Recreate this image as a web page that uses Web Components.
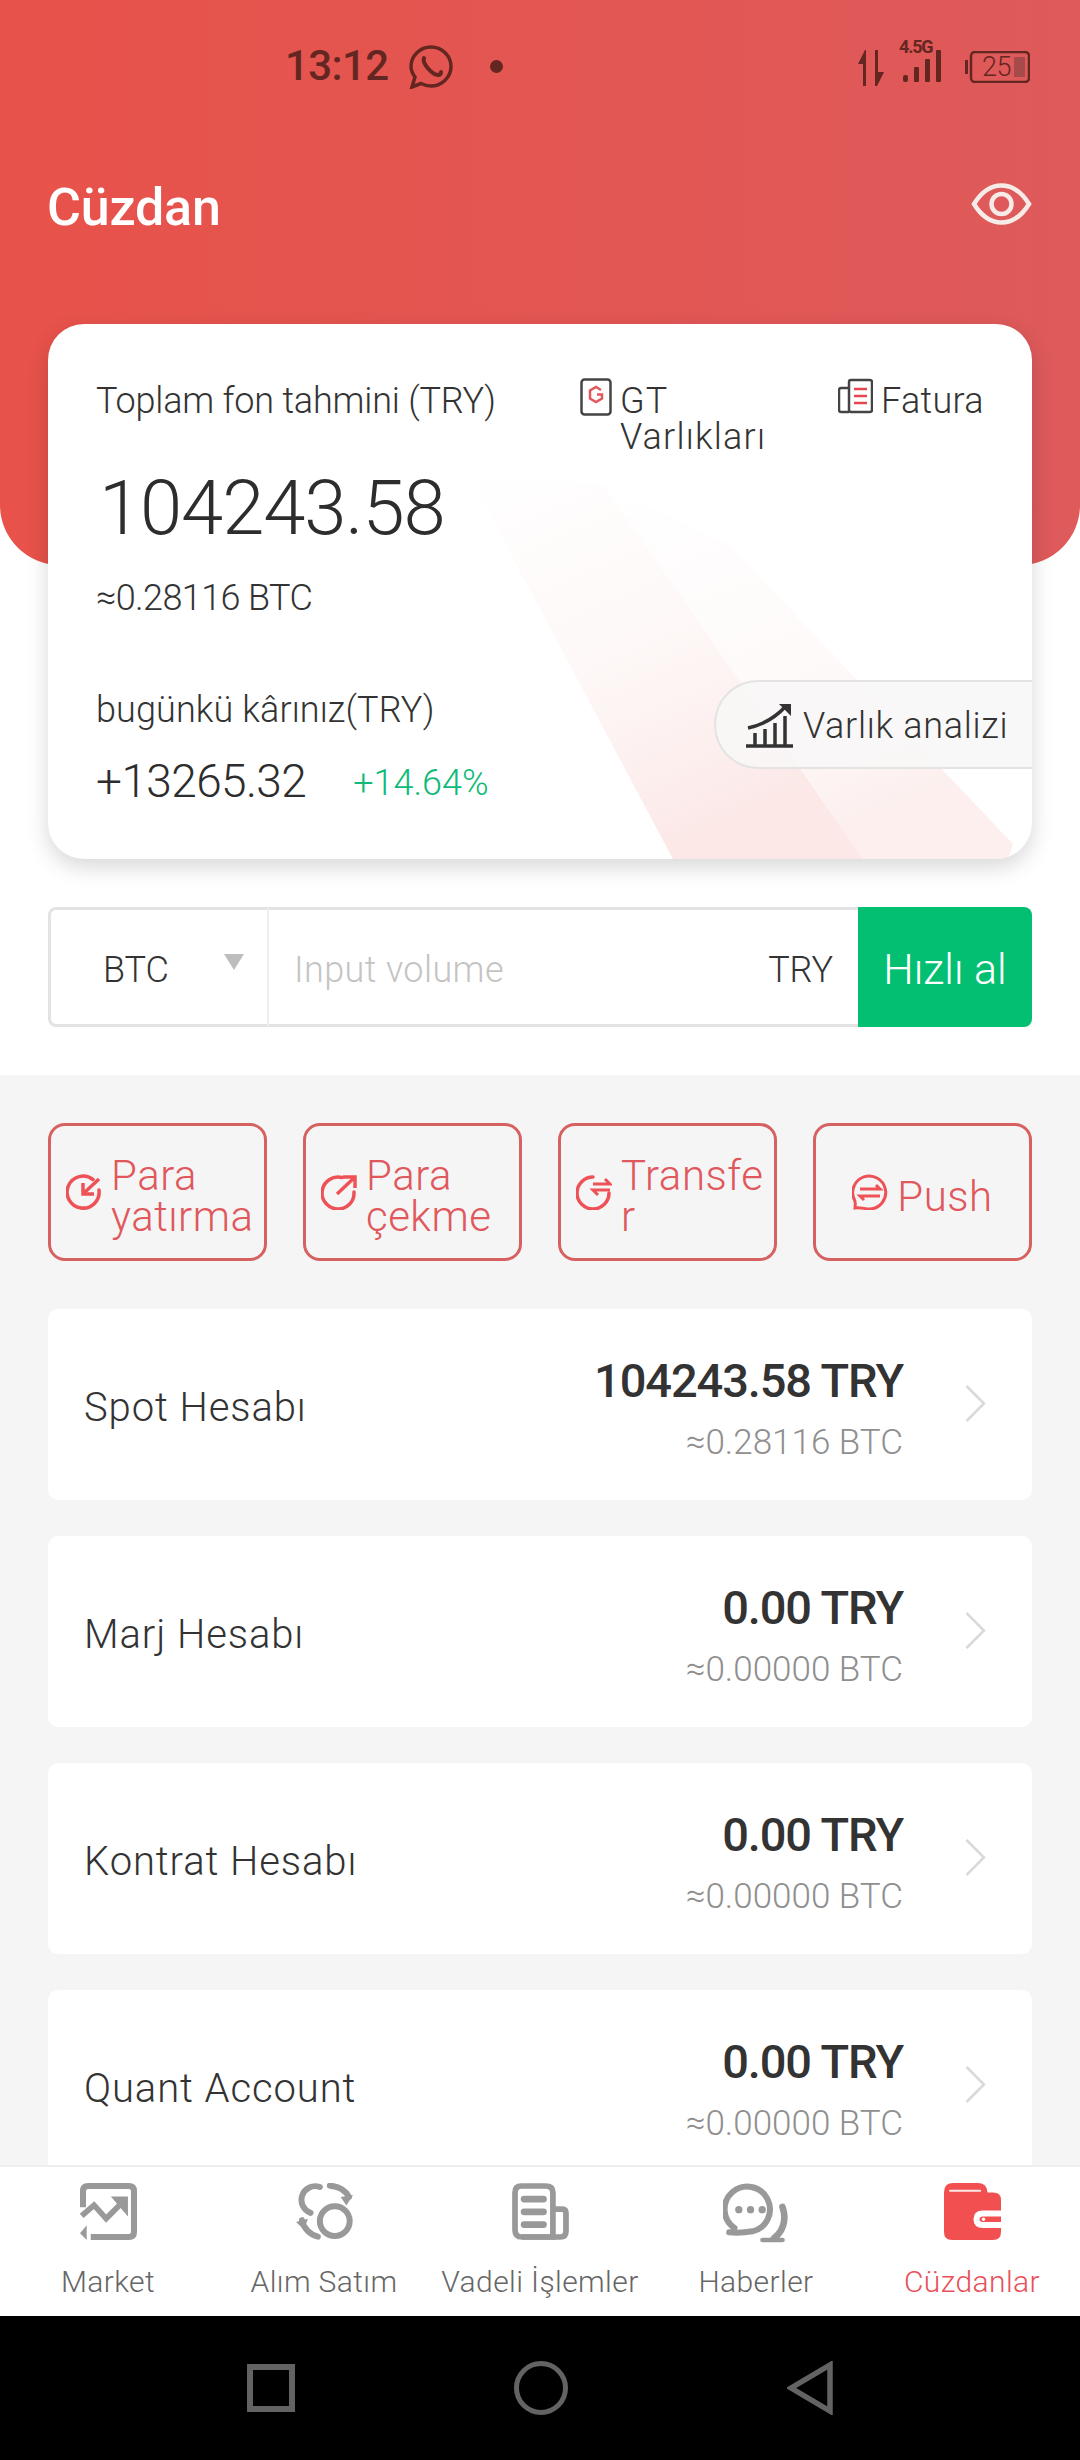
<!DOCTYPE html>
<html lang="tr">
<head>
<meta charset="utf-8">
<title>Cüzdan</title>
<style>
html,body{margin:0;padding:0;background:#000}
body{width:1080px;height:2460px;overflow:hidden;font-family:Roboto,"Noto Sans",sans-serif;font-weight:300;color:#333}
</style>
</head>
<body>
<wallet-app>
  <wallet-header>
    <status-bar></status-bar>
  </wallet-header>
  <asset-card></asset-card>
  <quick-buy></quick-buy>
  <wallet-body>
    <action-row>
      <action-button icon="in">Para yatırma</action-button>
      <action-button icon="out">Para çekme</action-button>
      <action-button icon="swap" class="brk">Transfer</action-button>
      <action-button icon="push">Push</action-button>
    </action-row>
    <account-row>
      <span slot="name">Spot Hesabı</span>
      <span slot="value">104243.58 TRY</span>
      <span slot="sub">≈0.28116 BTC</span>
    </account-row>
    <account-row>
      <span slot="name">Marj Hesabı</span>
      <span slot="value">0.00 TRY</span>
      <span slot="sub">≈0.00000 BTC</span>
    </account-row>
    <account-row>
      <span slot="name">Kontrat Hesabı</span>
      <span slot="value">0.00 TRY</span>
      <span slot="sub">≈0.00000 BTC</span>
    </account-row>
    <account-row>
      <span slot="name">Quant Account</span>
      <span slot="value">0.00 TRY</span>
      <span slot="sub">≈0.00000 BTC</span>
    </account-row>
  </wallet-body>
  <bottom-nav slot="nav">
    <nav-item icon="market">Market</nav-item>
    <nav-item icon="trade">Alım Satım</nav-item>
    <nav-item icon="futures">Vadeli İşlemler</nav-item>
    <nav-item icon="news">Haberler</nav-item>
    <nav-item icon="wallet" active>Cüzdanlar</nav-item>
  </bottom-nav>
  <system-nav slot="nav"></system-nav>
</wallet-app>
<script>
function def(name, html, setup){
  customElements.define(name, class extends HTMLElement{
    constructor(){
      super();
      this.attachShadow({mode:'open'}).innerHTML = html;
    }
    connectedCallback(){ if(setup) setup(this); }
  });
}

def('wallet-app', `<style>
:host{display:flex;flex-direction:column;width:1080px;height:2460px}
main{flex:1;min-height:0;overflow:hidden;background:#fff}
</style><main><slot></slot></main><slot name="nav"></slot>`);

def('wallet-header', `<style>
:host{display:block;height:565px;box-sizing:border-box;background:linear-gradient(90deg,#e8524a,#de5a5b);border-radius:0 0 60px 60px}
.t{display:flex;justify-content:space-between;align-items:flex-start;padding:84px 48px 0 47px;color:#fff}
h1{margin:0;font:500 52px/62px Roboto,sans-serif;letter-spacing:-.2px}
svg{display:block;margin-top:6px}
</style><slot></slot><div class="t"><h1>Cüzdan</h1>
<svg width="61" height="42" viewBox="0 0 61 42" fill="none" stroke="#f7ebe8" stroke-width="4.500"><path d="M3 21C11 8 20 2.500 30.500 2.500S50 8 58 21C50 34 41 39.500 30.500 39.500S11 34 3 21Z"/><circle cx="30.500" cy="21" r="10"/></svg></div>`);

def('status-bar', `<style>
:host{display:flex;align-items:flex-start;height:93px;box-sizing:border-box;padding:40px 50px 0 285px;color:#642620}
.time{font:500 42px/52px Roboto,sans-serif;letter-spacing:-.6px;width:124px;margin-top:0}
.dot{width:13px;height:13px;border-radius:50%;background:#642620;margin:20px 0 0 37px}
.right{margin-left:auto;display:flex;align-items:flex-start}
.net{position:relative;width:46px;height:40px;margin:6px 20px 0 14px}
.net b{position:absolute;left:0;top:-8px;font:700 18px/18px Roboto,sans-serif;letter-spacing:-1.200px}
.bat{position:relative;width:65px;height:32px;margin-top:11px}
.bat span{position:absolute;left:17px;top:3px;font:300 27px/27px Roboto,sans-serif;letter-spacing:-.5px}
</style>
<span class="time">13:12</span>
<svg width="44" height="44" viewBox="0 0 44 44" style="margin-top:5px" fill="none" stroke="#642620"><path stroke-width="3.500" d="M3 42l3-10C3 28 2 25 2 21.500 2 11 11 2 22 2s20 9 20 19.500S33 41 22 41c-4 0-7-1-10-2.500Z"/><path stroke-width="4" stroke-linecap="round" d="M15 13c-2 5 7 16 14 17 2 0 3-1 3-3"/></svg>
<i class="dot"></i>
<div class="right">
<svg width="28" height="36" viewBox="0 0 28 36" style="margin-top:10px" fill="#642620"><path d="M8 0 1 14h5v22h3V0ZM18 0h3v22h6L20 36h-2Z"/></svg>
<div class="net"><b>4.5G</b><svg width="46" height="40" viewBox="0 0 46 40" fill="#642620" style="display:block"><rect x="4" y="29" width="5" height="7" rx="2"/><rect x="15" y="21" width="5" height="15" rx="1"/><rect x="26" y="13" width="5" height="23" rx="1"/><rect x="37" y="4" width="5" height="32" rx="1"/></svg></div>
<div class="bat"><svg width="65" height="32" viewBox="0 0 65 32" fill="none" style="display:block"><rect x="0" y="9" width="3" height="14" fill="#642620"/><rect x="6" y="1" width="58" height="30" rx="4" stroke="#642620" stroke-width="2.500"/><rect x="49" y="6" width="11" height="20" fill="#a64a4c"/></svg><span>25</span></div>
</div>`);

def('asset-card', `<style>
:host{display:block;position:relative;margin:-241px 48px 0;height:535px;box-sizing:border-box;background:#fff;border-radius:36px;box-shadow:0 8px 22px rgba(0,0,0,.16);overflow:hidden;padding:59px 48px 0;font-size:36px;color:#333}
.bg{position:absolute;left:0;top:0}
.top,.bottom,.sum{position:relative}
.top{display:grid;grid-template-columns:484px 258px auto;line-height:36px}
.top>span{letter-spacing:-.2px}
.top>div{display:flex;align-items:flex-start;gap:8px;letter-spacing:.3px}
.top svg{flex:none;margin-top:-5px}
.gt{width:min-content;letter-spacing:1.200px}
.amount{font-size:76px;line-height:90px;letter-spacing:-1.100px;margin:8px 0 0 3px;color:#2d2d2d}
.btc{line-height:36px;margin-top:27px;letter-spacing:-.6px}
.bottom{display:flex;justify-content:space-between;margin-top:76px}
.lab{line-height:36px;letter-spacing:.1px}
.pnl{font-size:46px;line-height:56px;margin-top:25px;letter-spacing:-.6px;color:#2d2d2d}
.pct{font-size:36px;color:#0fba78;margin-left:47px;vertical-align:2px;letter-spacing:0}
.pill{display:flex;align-items:center;gap:10px;box-sizing:border-box;width:318px;height:89px;margin:-12px -48px 0 0;padding:3px 0 0 30px;border:2px solid #e4e3e3;border-right:0;border-radius:44px 0 0 44px;background:rgba(248,247,247,.85);letter-spacing:.7px;white-space:nowrap}
.pill svg{flex:none;margin-top:-3px}
</style>
<svg class="bg" width="984" height="535" viewBox="0 0 984 535"><defs>
<linearGradient id="a" x1="0" y1="0" x2="0.45" y2="1"><stop offset="0" stop-color="#fdf3f2" stop-opacity="0"/><stop offset=".5" stop-color="#fdf5f4" stop-opacity=".65"/><stop offset="1" stop-color="#fbe8e7"/></linearGradient>
<linearGradient id="b" x1="0" y1="0" x2="0.45" y2="1"><stop offset="0" stop-color="#fdf6f5" stop-opacity="0"/><stop offset=".6" stop-color="#fdf6f5" stop-opacity=".6"/><stop offset="1" stop-color="#fcefee"/></linearGradient></defs>
<polygon points="420,150 555,160 815,535 625,535" fill="url(#a)"/>
<polygon points="555,160 680,220 965,520 960,535 815,535" fill="url(#b)"/></svg>
<div class="top">
  <span>Toplam fon tahmini (TRY)</span>
  <div><svg width="32" height="38" viewBox="0 0 32 38" fill="none"><rect x="1.500" y="1.500" width="29" height="35" rx="3" stroke="#444" stroke-width="2.500"/><path d="M21 12l-5-3-6 3.500v8l6 3.500 6-3.500v-4h-5" stroke="#e0585c" stroke-width="2.500"/></svg><span class="gt">GT Varlıkları</span></div>
  <div><svg width="35" height="36" viewBox="0 0 35 36" fill="none" stroke="#444" stroke-width="2.500"><path d="M11 10H3q-2 0-2 2v20q0 2 2 2h8"/><rect x="11" y="2" width="23" height="32" rx="2"/><path d="M16 11h13M16 18h13M16 25h13" stroke="#e8464f" stroke-width="2.500"/></svg><span>Fatura</span></div>
</div>
<div class="sum"><div class="amount">104243.58</div><div class="btc">≈0.28116 BTC</div></div>
<div class="bottom">
  <div><div class="lab">bugünkü kârınız(TRY)</div><div class="pnl">+13265.32<span class="pct">+14.64%</span></div></div>
  <div class="pill"><svg width="47" height="46" viewBox="0 0 47 46" fill="none" stroke="#333"><path d="M2 26C16 23 30 15 40 4" stroke-width="3.500"/><path d="M33 2h12v12z" fill="#333" stroke="none"/><path d="M0 44h47" stroke-width="3.500"/><path d="M9 43V31M19 43V27M29 43V21M39 43V14" stroke-width="3.500"/></svg><span>Varlık analizi</span></div>
</div>`);

def('quick-buy', `<style>
:host{display:block;padding:48px 48px 48px;background:#fff}
.r{display:flex;height:120px;font-size:36px;color:#333;letter-spacing:-.1px}
.r span{padding-top:5px}
.sel{flex:none;width:221px;box-sizing:border-box;border:3px solid #e3e3e3;border-right-width:2px;border-color:#e3e3e3 #efefef #e3e3e3 #e3e3e3;border-radius:8px 0 0 8px;display:flex;align-items:center;padding-left:52px;position:relative}
.tri{width:0;height:0;border:10.500px solid transparent;border-top:16px solid #bdbdbd;border-bottom:0;margin:-10px 0 0 55px}
.inp{flex:1;display:flex;align-items:center;justify-content:space-between;border:solid #e3e3e3;border-width:3px 0;padding:0 25px}
.ph{color:#c4c4c4;letter-spacing:.4px}
.btn{flex:none;width:174px;background:#03bf72;color:#fff;border-radius:0 8px 8px 0;display:flex;align-items:center;justify-content:center;font-size:43px;letter-spacing:0;white-space:nowrap}
.btn span{padding-top:3px}
</style><div class="r"><div class="sel"><span>BTC</span><i class="tri"></i></div><div class="inp"><span class="ph">Input volume</span><span>TRY</span></div><div class="btn"><span>Hızlı al</span></div></div>`);

def('wallet-body', `<style>
:host{display:flex;flex-direction:column;gap:36px;background:#f5f5f5;padding:48px 48px 0;min-height:1200px}
</style><slot></slot>`);

def('action-row', `<style>
:host{display:grid;grid-template-columns:repeat(4,219px);justify-content:space-between;margin-bottom:12px}
</style><slot></slot>`);

const AI = {
 in:`<path d="M27 5.500A16 16 0 1 0 33 16" stroke-linecap="round"/><path d="M33 5 18 19"/><path d="M17 9v11h11" />`,
 out:`<path d="M21 3.500A16 16 0 1 0 33 18" stroke-linecap="round"/><path d="M16 20 33 4"/><path d="M22 3h12v11" />`,
 swap:`<path d="M17 3A16 16 0 1 0 33 19" stroke-linecap="round"/><path d="M17 10h17l-5-5M34 16H17l5 5" stroke-width="3"/>`,
 push:`<path d="M3 34c0-3 1-5-.500-8A16.500 16.500 0 1 1 18 35c-5 0-10-2-15-1Z" stroke-width="3"/><path d="M8 15h20l-4-4M28 22H8l4 4" stroke-width="3"/>`
};
def('action-button', `<style>
:host{display:flex;align-items:center;justify-content:flex-start;gap:9px;height:138px;box-sizing:border-box;border:3px solid #d66161;border-radius:17px;color:#e0575c;font-size:42px;line-height:41px;letter-spacing:.5px;padding:0 0 0 15px}
:host(.brk) .t{word-break:break-all;width:146px}
:host([icon=push]){justify-content:center;padding:0}
svg{flex:none;margin-top:0}
.t{min-width:0;width:min-content;flex:0 1 auto;margin-top:8px}
:host([icon=push]) .t{margin-top:8px}
</style><svg width="36" height="36" viewBox="0 0 36 36" fill="none" stroke="#ee5256" stroke-width="3.500"></svg><span class="t"><slot></slot></span>`,
 el=>{ el.shadowRoot.querySelector('svg').innerHTML = AI[el.getAttribute('icon')]; });

def('account-row', `<style>
:host{display:flex;align-items:center;height:191px;flex:none;box-sizing:border-box;background:#fff;border-radius:10px;padding:0 46px 0 36px}
.n{flex:1;font-size:40px;line-height:48px;color:#333;letter-spacing:.9px;margin-top:7px}
.v{text-align:right;display:flex;flex-direction:column;margin-right:62px;margin-top:6px}
.a{font:500 47px/60px Roboto,sans-serif;color:#333;letter-spacing:-1.100px}
.b{font-size:35px;line-height:42px;color:#8f8f8f;margin-top:11px;letter-spacing:0}
svg{flex:none;margin-top:-3px}
</style><div class="n"><slot name="name"></slot></div><div class="v"><span class="a"><slot name="value"></slot></span><span class="b"><slot name="sub"></slot></span></div>
<svg width="21" height="37" viewBox="0 0 21 37" fill="none" stroke="#d9d9d9" stroke-width="2.500"><path d="M1.500 1 19 18.500 1.500 36"/></svg>`);

def('bottom-nav', `<style>
:host{display:grid;grid-template-columns:repeat(5,216px);height:151px;box-sizing:border-box;background:#fff;border-top:2px solid #eee;flex:none}
</style><slot></slot>`);

const NI = {
 market:`<svg width="57" height="57" viewBox="0 0 170 170" fill="none" stroke="#999" stroke-width="18"><path d="M9 72V24Q9 9 24 9H146Q161 9 161 24V146Q161 161 146 161H32"/><path d="M5 98 42 66 78 106 128 56" stroke-width="17"/><path d="M92 40H143V100Z" fill="#999" stroke="none"/><path d="M0 150 20 126V170Z" fill="#999" stroke="none"/></svg>`,
 trade:`<svg width="57" height="57" viewBox="0 0 172 172" fill="none" stroke="#999" stroke-width="18"><circle cx="117" cy="115" r="45"/><path d="M72 12A38 38 0 1 0 44 90" stroke-linecap="round"/><path d="M102 8C130 10 150 24 160 42" stroke-linecap="round"/><path d="M135 42 172 36 152 68Z" fill="#999" stroke="none"/><path d="M18 112C22 136 42 156 66 162" stroke-linecap="round"/><path d="M0 118 36 108 24 140Z" fill="#999" stroke="none"/></svg>`,
 futures:`<svg width="57" height="57" viewBox="0 0 170 170" fill="none" stroke="#999" stroke-width="17"><path d="M30 161Q9 161 9 140V28Q9 9 28 9H100Q122 9 122 28V161Z"/><path d="M122 78H150Q161 78 161 90V144Q161 161 144 161H30"/><path d="M36 48H94M36 86H94M36 124H94" stroke-width="20" stroke-linecap="round"/></svg>`,
 news:`<svg width="67" height="60" viewBox="0 0 200 180" fill="none" stroke="#999" stroke-width="18"><path d="M34 135A68 68 0 1 1 88 145C70 148 40 150 18 148" stroke-linecap="round"/><path d="M178 72C192 112 178 146 152 166" stroke-width="20" stroke-linecap="round"/><path d="M118 171H178" stroke-width="14" stroke-linecap="round"/><g fill="#999" stroke="none"><circle cx="47" cy="80" r="11"/><circle cx="82" cy="80" r="11"/><circle cx="117" cy="80" r="11"/></g></svg>`,
 wallet:`<svg width="57" height="57" viewBox="0 0 170 170"><path fill="#f25050" d="M0 28Q0 0 28 0H100Q128 0 130 28H146Q170 28 170 50V146Q170 170 146 170H24Q0 170 0 146Z"/><path d="M18 23H108" stroke="#fbe9e9" stroke-width="6" stroke-linecap="round"/><path d="M170 82H116Q88 82 88 108T116 134H170Z" fill="#fff"/><path d="M170 100H116Q106 100 106 108T116 116H170Z" fill="#f25050"/><circle cx="118" cy="108" r="5" fill="#fff"/></svg>`
};
def('nav-item', `<style>
:host{display:flex;flex-direction:column;align-items:center;color:#666;font-size:30px;letter-spacing:.4px;white-space:nowrap}
:host([active]){color:#e9505a}
.i{height:57px;margin-top:16px;display:flex;align-items:flex-start;justify-content:center}
.l{line-height:36px;margin-top:24px}
</style><div class="i"></div><span class="l"><slot></slot></span>`,
 el=>{ el.shadowRoot.querySelector('.i').innerHTML = NI[el.getAttribute('icon')]; });

def('system-nav', `<style>
:host{display:flex;height:144px;flex:none;background:#000;align-items:center;justify-content:center;gap:219px;padding-right:1px;box-sizing:border-box}
svg{display:block;margin-top:-1px}
</style>
<svg width="48" height="48" viewBox="0 0 48 48" fill="none" stroke="#636363" stroke-width="6"><rect x="3" y="3" width="42" height="42"/></svg>
<svg width="54" height="54" viewBox="0 0 54 54" fill="none" stroke="#636363" stroke-width="5"><circle cx="27" cy="27" r="24.500"/></svg>
<svg width="46" height="54" viewBox="0 0 46 54" fill="none" stroke="#636363" stroke-width="5.500"><path d="M43 4V50L4 27Z"/></svg>`);
</script>
</body>
</html>
